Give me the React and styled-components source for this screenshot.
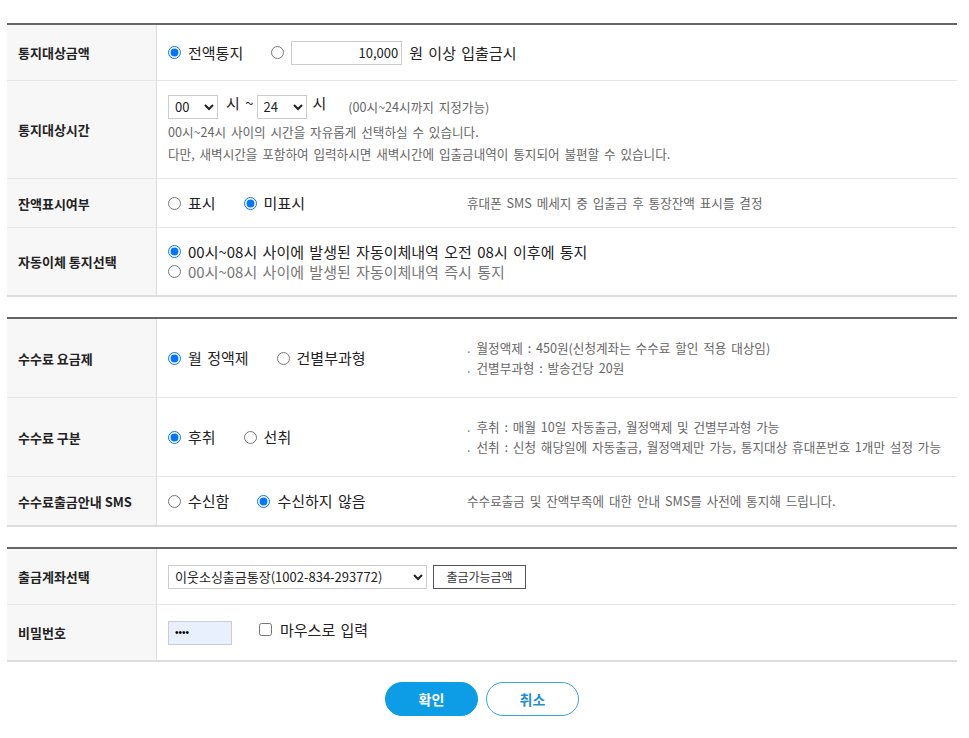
import React from 'react';
import styled, { createGlobalStyle } from 'styled-components';

const GlobalStyle = createGlobalStyle`
    body {
        margin: 0;
        background: #fff;
        font-family: "Noto Sans CJK KR", "Noto Sans", sans-serif;
        color: #222;
    }
    * { box-sizing: border-box; }
`;

const Page = styled.div`
    width: 950px;
    margin: 23px 0 0 7px;
`;

const Section = styled.div`
    border-top: 2px solid #666;
    border-bottom: 2px solid #ddd;
    margin-bottom: 20px;
`;

const Row = styled.div`
    display: grid;
    grid-template-columns: 150px 1fr;
    height: ${p => p.h}px;
    border-bottom: 1px solid #e6e6e6;
    &:last-child { border-bottom: 0; }
`;

const Label = styled.div`
    display: flex;
    align-items: center;
    padding-left: 11px;
    background: #f7f7f7;
    border-right: 1px solid #ddd;
    font-size: 13px;
    font-weight: 700;
    color: #222;
`;

const Cell = styled.div`
    display: flex;
    align-items: center;
    padding-left: 11px;
`;

const Options = styled.div`
    width: 299px;
    flex: none;
    display: flex;
    flex-direction: ${p => (p.column ? 'column' : 'row')};
    align-items: ${p => (p.column ? 'flex-start' : 'center')};
`;

const Stack = styled.div`
    display: flex;
    flex-direction: column;
`;

const Option = styled.label`
    display: inline-flex;
    align-items: center;
    gap: 7px;
    margin-right: ${p => (p.tight ? 7 : 28)}px;
    font-size: 15px;
    word-spacing: 2px;
    line-height: 20px;
    color: ${p => (p.muted ? '#777' : '#222')};
    white-space: nowrap;
    input {
        margin: 0;
        width: 13px;
        height: 13px;
    }
`;

const Hint = styled.div`
    font-size: 12.6px;
    word-spacing: 2px;
    line-height: ${p => p.lh || 20}px;
    color: #666;
    white-space: nowrap;
`;

const Dot = styled.span`
    margin-right: 6px;
    color: #888;
`;

const Amount = styled.input`
    width: 111px;
    height: 24px;
    border: 1px solid #ccc;
    text-align: right;
    font: 13px "Noto Sans CJK KR", sans-serif;
    color: #222;
    padding: 0 3px;
    margin-right: 7px;
`;

const Text = styled.span`
    font-size: 15px;
    word-spacing: 2px;
    color: #222;
    margin: ${p => p.m || '0'};
    white-space: nowrap;
`;

const Line = styled.div`
    display: flex;
    align-items: flex-start;
    height: 24px;
    margin-bottom: 2px;
`;

const Select = styled.select`
    width: ${p => p.w}px;
    height: 24px;
    border: 1px solid #ccc;
    border-radius: 0;
    background: #fff;
    font: 13px "Noto Sans CJK KR", sans-serif;
    color: #222;
    padding: 0 2px;
`;

const SmallButton = styled.button`
    height: 24px;
    width: 93px;
    margin-left: 6px;
    border: 1px solid #555;
    background: #fff;
    font: 12px "Noto Sans CJK KR", sans-serif;
    color: #333;
    padding: 0;
`;

const Password = styled.input`
    width: 64px;
    height: 24px;
    border: 1px solid #ccc;
    background: #e8f0fe;
    font-size: 10px;
    padding: 0 6px;
    margin-right: 27px;
`;

const Check = styled.label`
    display: inline-flex;
    align-items: center;
    gap: 8px;
    font-size: 15px;
    word-spacing: 2px;
    color: #222;
    margin-top: -6px;
    input { margin: 0; width: 13px; height: 13px; }
`;

const Buttons = styled.div`
    display: flex;
    justify-content: center;
    gap: 8px;
`;

const RoundButton = styled.button`
    width: 93px;
    height: 34px;
    border-radius: 17px;
    border: 1px solid ${p => (p.primary ? '#0d9de6' : '#3aa3e3')};
    background: ${p => (p.primary ? '#0d9de6' : '#fff')};
    color: ${p => (p.primary ? '#fff' : '#1f8fd6')};
    font: 700 14px "Noto Sans CJK KR", sans-serif;
    padding: 0;
`;

const Radio = ({ name, checked }) => (
    <input type="radio" name={name} defaultChecked={checked} />
);

const hours = ['00', '01', '02', '06', '08', '12', '18', '24'];

const App = () => {
    return (
        <Page>
            <GlobalStyle />

            <Section>
                <Row h={56}>
                    <Label>통지대상금액</Label>
                    <Cell>
                        <Option><Radio name="amt" checked />전액통지</Option>
                        <Option tight><Radio name="amt" /></Option>
                        <Amount defaultValue="10,000" />
                        <Text>원 이상 입출금시</Text>
                    </Cell>
                </Row>
                <Row h={98}>
                    <Label>통지대상시간</Label>
                    <Cell>
                        <Stack>
                            <Line>
                                <Select w={50} defaultValue="00">
                                    {hours.map(h => <option key={h}>{h}</option>)}
                                </Select>
                                <Text m="-3px 3px 0 8px">시 ~</Text>
                                <Select w={50} defaultValue="24">
                                    {hours.map(h => <option key={h}>{h}</option>)}
                                </Select>
                                <Text m="-3px 22px 0 6px">시</Text>
                                <Hint lh={24}>(00시~24시까지 지정가능)</Hint>
                            </Line>
                            <Hint lh={22}>00시~24시 사이의 시간을 자유롭게 선택하실 수 있습니다.</Hint>
                            <Hint lh={22}>다만, 새벽시간을 포함하여 입력하시면 새벽시간에 입출금내역이 통지되어 불편할 수 있습니다.</Hint>
                        </Stack>
                    </Cell>
                </Row>
                <Row h={49}>
                    <Label>잔액표시여부</Label>
                    <Cell>
                        <Options>
                            <Option><Radio name="bal" />표시</Option>
                            <Option><Radio name="bal" checked />미표시</Option>
                        </Options>
                        <Hint>휴대폰 SMS 메세지 중 입출금 후 통장잔액 표시를 결정</Hint>
                    </Cell>
                </Row>
                <Row h={67}>
                    <Label>자동이체 통지선택</Label>
                    <Cell>
                        <Options column>
                            <Option><Radio name="auto" checked />00시~08시 사이에 발생된 자동이체내역 오전 08시 이후에 통지</Option>
                            <Option muted><Radio name="auto" />00시~08시 사이에 발생된 자동이체내역 즉시 통지</Option>
                        </Options>
                    </Cell>
                </Row>
            </Section>

            <Section>
                <Row h={79}>
                    <Label>수수료 요금제</Label>
                    <Cell>
                        <Options>
                            <Option><Radio name="plan" checked />월 정액제</Option>
                            <Option><Radio name="plan" />건별부과형</Option>
                        </Options>
                        <Stack>
                            <Hint><Dot>.</Dot>월정액제 : 450원(신청계좌는 수수료 할인 적용 대상임)</Hint>
                            <Hint><Dot>.</Dot>건별부과형 : 발송건당 20원</Hint>
                        </Stack>
                    </Cell>
                </Row>
                <Row h={79}>
                    <Label>수수료 구분</Label>
                    <Cell>
                        <Options>
                            <Option><Radio name="fee" checked />후취</Option>
                            <Option><Radio name="fee" />선취</Option>
                        </Options>
                        <Stack>
                            <Hint><Dot>.</Dot>후취 : 매월 10일 자동출금, 월정액제 및 건별부과형 가능</Hint>
                            <Hint><Dot>.</Dot>선취 : 신청 해당일에 자동출금, 월정액제만 가능, 통지대상 휴대폰번호 1개만 설정 가능</Hint>
                        </Stack>
                    </Cell>
                </Row>
                <Row h={48}>
                    <Label>수수료출금안내 SMS</Label>
                    <Cell>
                        <Options>
                            <Option><Radio name="sms" />수신함</Option>
                            <Option><Radio name="sms" checked />수신하지 않음</Option>
                        </Options>
                        <Hint>수수료출금 및 잔액부족에 대한 안내 SMS를 사전에 통지해 드립니다.</Hint>
                    </Cell>
                </Row>
            </Section>

            <Section>
                <Row h={56}>
                    <Label>출금계좌선택</Label>
                    <Cell>
                        <Select w={259}>
                            <option>이웃소싱출금통장(1002-834-293772)</option>
                        </Select>
                        <SmallButton type="button">출금가능금액</SmallButton>
                    </Cell>
                </Row>
                <Row h={55}>
                    <Label>비밀번호</Label>
                    <Cell>
                        <Password type="password" defaultValue="1234" />
                        <Check><input type="checkbox" />마우스로 입력</Check>
                    </Cell>
                </Row>
            </Section>

            <Buttons>
                <RoundButton primary type="button">확인</RoundButton>
                <RoundButton type="button">취소</RoundButton>
            </Buttons>
        </Page>
    );
};

export default App;
